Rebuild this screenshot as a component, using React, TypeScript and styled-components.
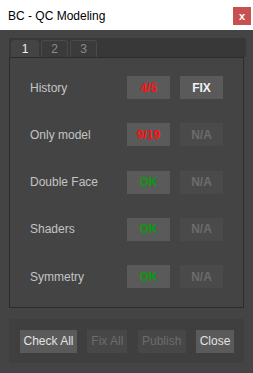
import React from 'react';
import styled, { createGlobalStyle } from 'styled-components';

const GlobalStyle = createGlobalStyle`
    html, body {
        margin: 0;
        padding: 0;
        background: #444444;
    }
    body {
        font-family: "Liberation Sans", Arial, sans-serif;
    }
`;

const Window = styled.div`
    width: 253px;
    height: 373px;
    display: flex;
    flex-direction: column;
    background: #444444;
    overflow: hidden;
`;

const TitleBar = styled.div`
    height: 30px;
    flex: none;
    display: flex;
    align-items: center;
    justify-content: space-between;
    background: #ffffff;
    padding: 0 2px 0 8px;
    box-sizing: border-box;
`;

const Title = styled.span`
    font-size: 12px;
    color: #000000;
    padding-top: 1px;
`;

const CloseX = styled.div`
    width: 18px;
    height: 18px;
    background: #c75050;
    color: #ffffff;
    font-size: 11px;
    font-weight: bold;
    display: flex;
    align-items: center;
    justify-content: center;
    margin-top: 2px;
`;

const Body = styled.div`
    flex: 1;
    display: flex;
    flex-direction: column;
    padding: 8px 9px 0 9px;
`;

const TabStrip = styled.div`
    display: flex;
    align-items: flex-end;
    gap: 2px;
    height: 19px;
    background: #383838;
    padding-left: 2px;
    width: 235px;
`;

const Tab = styled.div<{ $active?: boolean }>`
    width: ${(p) => (p.$active ? 28 : 27)}px;
    height: 17px;
    box-sizing: border-box;
    border-radius: 3px 3px 0 0;
    background: ${(p) => (p.$active ? '#444444' : '#3b3b3b')};
    border: 1px solid ${(p) => (p.$active ? '#444444' : '#4a4a4a')};
    border-bottom: none;
    color: ${(p) => (p.$active ? '#f0f0f0' : '#8a8a8a')};
    font-size: 12px;
    display: flex;
    align-items: center;
    justify-content: center;
`;

const Panel = styled.div`
    width: 235px;
    height: 251px;
    box-sizing: border-box;
    border: 1px solid #2c2c2c;
    padding: 18px 0 0 20px;
`;

const Grid = styled.div`
    display: grid;
    grid-template-columns: 87px 43px 43px;
    grid-auto-rows: 23px;
    column-gap: 10px;
    row-gap: 24.25px;
    align-items: center;
`;

const Label = styled.span`
    font-size: 12px;
    color: #c4c4c4;
`;

type Tone = 'red' | 'green' | 'white' | 'off';

const toneColor: Record<Tone, string> = {
    red: '#ff1010',
    green: '#0c9a0c',
    white: '#f2f2f2',
    off: '#6c6c6c',
};

const StatusButton = styled.div<{ $tone: Tone }>`
    height: 23px;
    display: flex;
    align-items: center;
    justify-content: center;
    background: ${(p) => (p.$tone === 'off' ? '#4a4a4a' : '#5a5a5a')};
    color: ${(p) => toneColor[p.$tone]};
    font-size: 12px;
    font-weight: bold;
`;

const Footer = styled.div`
    margin-top: 11px;
    width: 235px;
    height: 44px;
    box-sizing: border-box;
    background: #3f3f3f;
    display: flex;
    align-items: center;
    justify-content: space-between;
    padding: 0 10px 0 11px;
`;

const FooterButton = styled.div<{ $w: number; $off?: boolean }>`
    width: ${(p) => p.$w}px;
    height: 23px;
    display: flex;
    align-items: center;
    justify-content: center;
    background: ${(p) => (p.$off ? '#474747' : '#5a5a5a')};
    color: ${(p) => (p.$off ? '#6c6c6c' : '#e2e2e2')};
    font-size: 12px;
`;

type Check = {
    label: string
    result: string
    resultTone: Tone
    fixTone: Tone
    fixText: string
}

const checks: Check[] = [
    { label: 'History', result: '4/5', resultTone: 'red', fixText: 'FIX', fixTone: 'white' },
    { label: 'Only model', result: '9/19', resultTone: 'red', fixText: 'N/A', fixTone: 'off' },
    { label: 'Double Face', result: 'OK', resultTone: 'green', fixText: 'N/A', fixTone: 'off' },
    { label: 'Shaders', result: 'OK', resultTone: 'green', fixText: 'N/A', fixTone: 'off' },
    { label: 'Symmetry', result: 'OK', resultTone: 'green', fixText: 'N/A', fixTone: 'off' },
];

const App = () => {
    return (
        <Window>
            <GlobalStyle />
            <TitleBar>
                <Title>BC - QC Modeling</Title>
                <CloseX>x</CloseX>
            </TitleBar>
            <Body>
                <TabStrip>
                    <Tab $active>1</Tab>
                    <Tab>2</Tab>
                    <Tab>3</Tab>
                </TabStrip>
                <Panel>
                    <Grid>
                        {checks.map((c) => (
                            <React.Fragment key={c.label}>
                                <Label>{c.label}</Label>
                                <StatusButton $tone={c.resultTone}>{c.result}</StatusButton>
                                <StatusButton $tone={c.fixTone}>{c.fixText}</StatusButton>
                            </React.Fragment>
                        ))}
                    </Grid>
                </Panel>
                <Footer>
                    <FooterButton $w={57}>Check All</FooterButton>
                    <FooterButton $w={40} $off>Fix All</FooterButton>
                    <FooterButton $w={48} $off>Publish</FooterButton>
                    <FooterButton $w={38}>Close</FooterButton>
                </Footer>
            </Body>
        </Window>
    );
}

export default App;
